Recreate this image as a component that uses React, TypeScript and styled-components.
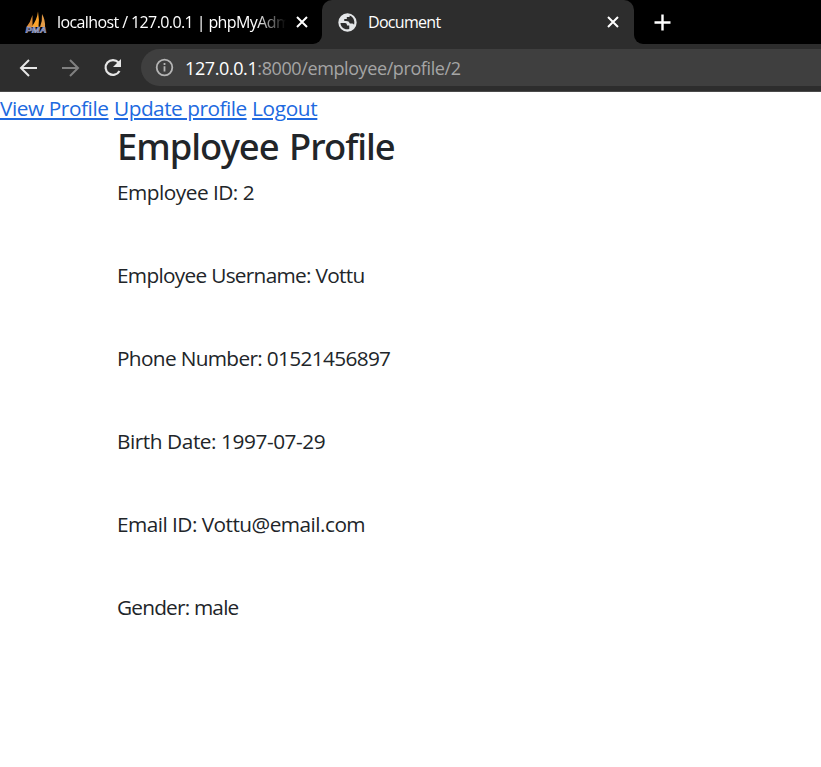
import React from "react";
import styled, { createGlobalStyle } from "styled-components";

const GlobalStyle = createGlobalStyle`
  * { box-sizing: border-box; }
  body {
    margin: 0;
    background: #fff;
    color: #212529;
    font-family: "Open Sans", "Noto Sans", sans-serif;
    overflow: hidden;
  }
`;

const Page = styled.div`
  width: 100%;
  height: 767px;
  overflow: hidden;
`;

const TabStrip = styled.div`
  display: grid;
  grid-template-columns: 322px 312px 1fr;
  height: 44px;
  background: #2d2d2d;
  color: #fff;
  font-size: 16px;
`;

const InactiveTab = styled.div`
  display: flex;
  align-items: center;
  padding-left: 25px;
  background: #000;
  border-bottom-right-radius: 9px;
`;

const ActiveTabSlot = styled.div`
  background: linear-gradient(#000 50%, #2d2d2d 50%);
`;

const ActiveTab = styled.div`
  display: flex;
  align-items: center;
  height: 44px;
  padding-left: 15px;
  background: #2d2d2d;
  border-radius: 10px 10px 0 0;
`;

const StripRest = styled.div`
  display: flex;
  align-items: center;
  padding-left: 20px;
  background: #000;
  border-bottom-left-radius: 9px;
`;

const TabTitle = styled.span<{ $width: number; $spacing: number; $fade?: boolean }>`
  flex: none;
  width: ${(p) => p.$width}px;
  margin-left: 10px;
  overflow: hidden;
  white-space: nowrap;
  line-height: 24px;
  letter-spacing: ${(p) => p.$spacing}px;
  ${(p) => p.$fade && "margin-right: 10px; mask-image: linear-gradient(90deg, #000 87%, transparent);"}
`;

const Toolbar = styled.div`
  display: flex;
  align-items: center;
  height: 48px;
  padding-left: 17px;
  background: #2d2d2d;
  border-bottom: 1px solid #4a4a4a;
`;

const NavIcon = styled.svg`
  flex: none;
  width: 24px;
  height: 24px;
  margin-right: 18px;
`;

const AddressBar = styled.div`
  display: flex;
  flex: 1;
  align-items: center;
  height: 37px;
  margin-left: -2px;
  padding-left: 14px;
  background: #3f3f3f;
  border-radius: 19px 0 0 19px;
  color: #a5a5a5;
  font-size: 18px;
`;

const Url = styled.span`
  margin-left: 11px;
  line-height: 26px;
  letter-spacing: -0.4px;
  white-space: nowrap;
`;

const Host = styled.span`
  color: #fff;
`;

const Links = styled.nav`
  display: flex;
  gap: 5.5px;
  height: 31.2px;
  padding-top: 1px;
  font-size: 20.8px;
  line-height: 31.2px;
`;

const Link = styled.a<{ $spacing: number }>`
  color: #2069e0;
  letter-spacing: ${(p) => p.$spacing}px;
  white-space: nowrap;
  text-decoration: underline;
  text-decoration-thickness: 2px;
  text-underline-offset: 2px;
  text-decoration-skip-ink: auto;
`;

const Container = styled.main`
  padding-left: 117px;
`;

const Heading = styled.h3<{ $spacing: number }>`
  margin: 0 0 8.4px;
  padding-top: 2px;
  font-family: "Noto Sans", "Open Sans", sans-serif;
  font-size: 36.4px;
  font-weight: 500;
  line-height: 43.7px;
  letter-spacing: ${(p) => p.$spacing}px;
  word-spacing: 2px;
`;

const Field = styled.p<{ $spacing: number }>`
  margin: 0 0 52px;
  font-size: 20.8px;
  line-height: 31px;
  letter-spacing: ${(p) => p.$spacing}px;
`;

const fields = [
  { text: "Employee ID: 2", spacing: -0.5 },
  { text: "Employee Username: Vottu", spacing: -0.7 },
  { text: "Phone Number: 01521456897", spacing: -0.66 },
  { text: "Birth Date: 1997-07-29", spacing: -0.44 },
  { text: "Email ID: Vottu@email.com", spacing: -0.53 },
  { text: "Gender: male", spacing: -0.8 },
];

const SailLogo = () => (
  <svg width="22" height="22" viewBox="0 0 22 22">
    <path d="M7.500 4V16H1.500Q5.500 11 7.500 4Z" fill="#d98a35" />
    <path d="M13 0.500Q14.500 9 13.500 16H6.500Q12 9 13 0.500Z" fill="#fba42c" />
    <path d="M17 3Q20.500 9 20 16H15Q17.500 10 17 3Z" fill="#e39a45" />
    <text x="0.500" y="21.500" fontFamily="Liberation Sans, sans-serif" fontSize="8.500" fontWeight="700" fontStyle="italic" textLength="21" lengthAdjust="spacingAndGlyphs" fill="#4d5590" stroke="#b9bdda" strokeWidth="0.500">PMA</text>
  </svg>
);

const CloseIcon = () => (
  <svg width="12" height="12" viewBox="0 0 12 12" stroke="#fff" strokeWidth="2">
    <path d="M1 1l10 10M11 1L1 11" />
  </svg>
);

const GlobeIcon = () => (
  <svg width="21" height="21" viewBox="0 0 24 24" fill="#e4e6e8">
    <path d="M12 1.5a10.5 10.5 0 1 0 0 21 10.5 10.5 0 0 0 0-21ZM4 12.5l5 .2c2 0 2.4 1.2 2.4 2.8H14v3.8c-5 1.5-10-1.8-10-6.8ZM19.5 14.5c-.6-.8-1.3-1.3-2.2-1.3h-2.6c-.7-2-2-2.9-4.2-2.9H8.3V8h2.9V5.8h3.2V4c3.8 1.2 6.4 5.5 5.1 10.5Z" />
  </svg>
);

export default function App() {
  return (
    <Page>
      <GlobalStyle />
      <TabStrip>
        <InactiveTab>
          <SailLogo />
          <TabTitle $width={229} $spacing={-0.6} $fade>localhost / 127.0.0.1 | phpMyAdm</TabTitle>
          <CloseIcon />
        </InactiveTab>
        <ActiveTabSlot>
          <ActiveTab>
            <GlobeIcon />
            <TabTitle $width={239} $spacing={-0.7}>Document</TabTitle>
            <CloseIcon />
          </ActiveTab>
        </ActiveTabSlot>
        <StripRest>
          <svg width="17" height="17" viewBox="0 0 17 17" stroke="#fff" strokeWidth="2.4">
            <path d="M8.5 0.5v16M0.5 8.5h16" />
          </svg>
        </StripRest>
      </TabStrip>
      <Toolbar>
        <NavIcon viewBox="0 0 24 24" fill="none" stroke="#e6e6e6" strokeWidth="2">
          <path d="M20 12H4.5M12 4l-8 8 8 8" />
        </NavIcon>
        <NavIcon viewBox="0 0 24 24" fill="none" stroke="#808080" strokeWidth="2">
          <path d="M3 12h15.500M11 4l8 8-8 8" />
        </NavIcon>
        <NavIcon viewBox="0 0 24 24" fill="none" stroke="#e6e6e6" strokeWidth="2.2">
          <path d="M17.500 6.500A7.400 7.400 0 1 0 18.500 15" />
          <path d="M20 3v8h-8Z" fill="#e6e6e6" stroke="none" />
        </NavIcon>
        <AddressBar>
          <svg width="19" height="19" viewBox="0 0 19 19" fill="none" stroke="#b5b5b5" strokeWidth="1.8">
            <circle cx="9.500" cy="9.500" r="7.800" />
            <path d="M9.500 8.300v5.200M9.500 5v2" />
          </svg>
          <Url><Host>127.0.0.1</Host>:8000/employee/profile/2</Url>
        </AddressBar>
      </Toolbar>
      <Links>
        <Link href="#view" $spacing={-0.42}>View Profile</Link>
        <Link href="#update" $spacing={-0.5}>Update profile</Link>
        <Link href="#logout" $spacing={-0.35}>Logout</Link>
      </Links>
      <Container>
        <Heading $spacing={-1}>Employee Profile</Heading>
        {fields.map((f) => (
          <Field key={f.text} $spacing={f.spacing}>{f.text}</Field>
        ))}
      </Container>
    </Page>
  );
}
